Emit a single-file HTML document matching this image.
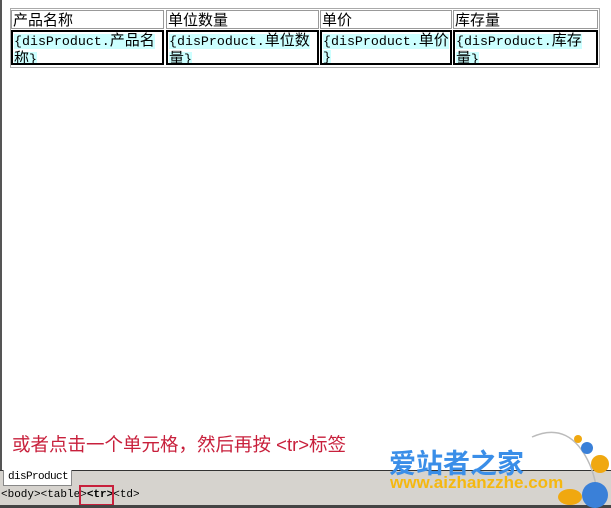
<!DOCTYPE html>
<html><head><meta charset="utf-8"><style>
*{margin:0;padding:0;box-sizing:border-box}
body{width:611px;height:508px;background:#fff;position:relative;overflow:hidden;font-family:"Liberation Sans","WenQuanYi Zen Hei","Noto Sans CJK SC",sans-serif;font-size:14px;color:#000}
.abs{position:absolute}
.c{position:absolute;line-height:16px;font-family:"Liberation Mono",monospace;font-size:13.3px;white-space:nowrap}
.c i{font-style:normal;font-family:"WenQuanYi Zen Hei","Noto Sans CJK SC",sans-serif;font-size:15px}
.h{border:1px solid #999;top:10px;height:19px;padding:1px 1px 0}
.h{font-family:"WenQuanYi Zen Hei","Noto Sans CJK SC",sans-serif;font-size:15px}
.d{border:2px solid #000;top:30px;height:35px;padding:0 1px;overflow:hidden}
.d span{background:#ccffff}
</style></head><body>
<div class="abs" style="left:0;top:0;width:2px;height:471px;background:#555"></div>
<div class="abs" style="left:10px;top:8px;width:590px;height:60px;border:1px solid #aaa"></div>
<div class="c h" style="left:11px;width:153px">产品名称</div>
<div class="c h" style="left:166px;width:153px">单位数量</div>
<div class="c h" style="left:320px;width:132px">单价</div>
<div class="c h" style="left:453px;width:145px">库存量</div>
<div class="c d" style="left:11px;width:153px"><span>{disProduct.<i>产品名</i></span><br><span><i>称</i>}</span></div>
<div class="c d" style="left:166px;width:153px"><span>{disProduct.<i>单位数</i></span><br><span><i>量</i>}</span></div>
<div class="c d" style="left:320px;width:132px"><span>{disProduct.<i>单价</i></span><br><span>}</span></div>
<div class="c d" style="left:453px;width:145px"><span>{disProduct.<i>库存</i></span><br><span><i>量</i>}</span></div>
<div class="abs" style="left:12px;top:431px;color:#c8203c;font-size:18.5px;white-space:nowrap">或者点击一个单元格，然后再按 &lt;tr&gt;标签</div>
<div class="abs" style="left:0;top:470px;width:611px;height:38px;background:#d6d3ce;border-top:1px solid #333"></div>
<div class="abs" style="left:3px;top:470px;width:69px;height:16px;background:#fff;border:1px solid #888;border-top:none;font-family:'Liberation Mono',monospace;font-size:11px;letter-spacing:-0.6px;line-height:15px;padding-left:4px">disProduct</div>
<div class="abs" style="left:1px;top:488px;font-family:'Liberation Mono',monospace;font-size:11px;white-space:nowrap;line-height:14px">&lt;body&gt;&lt;table&gt;<b>&lt;tr&gt;</b>&lt;td&gt;</div>
<div class="abs" style="left:79px;top:485px;width:35px;height:21px;border:2px solid #c8203c"></div>
<div class="abs" style="left:0;top:505px;width:611px;height:3px;background:#444"></div>
<div class="abs" style="left:389px;top:442px;color:#3a8ee8;font-size:27px;font-weight:bold;white-space:nowrap">爱站者之家</div>
<div class="abs" style="left:390px;top:473px;color:#f5b810;font-size:17px;font-weight:bold;white-space:nowrap">www.aizhanzzhe.com</div>
<svg class="abs" style="left:520px;top:425px" width="91" height="83">
<path d="M12 12 Q50 -5 70 40 Q80 65 75 83" fill="none" stroke="#bbb" stroke-width="1.5"/>
<circle cx="58" cy="14" r="4" fill="#f0a810"/>
<circle cx="67" cy="23" r="6" fill="#3a80d8"/>
<circle cx="80" cy="39" r="9" fill="#f0a810"/>
<circle cx="75" cy="70" r="13" fill="#3a80d8"/>
<ellipse cx="50" cy="72" rx="12" ry="8" fill="#f0a810"/>
</svg>
</body></html>
